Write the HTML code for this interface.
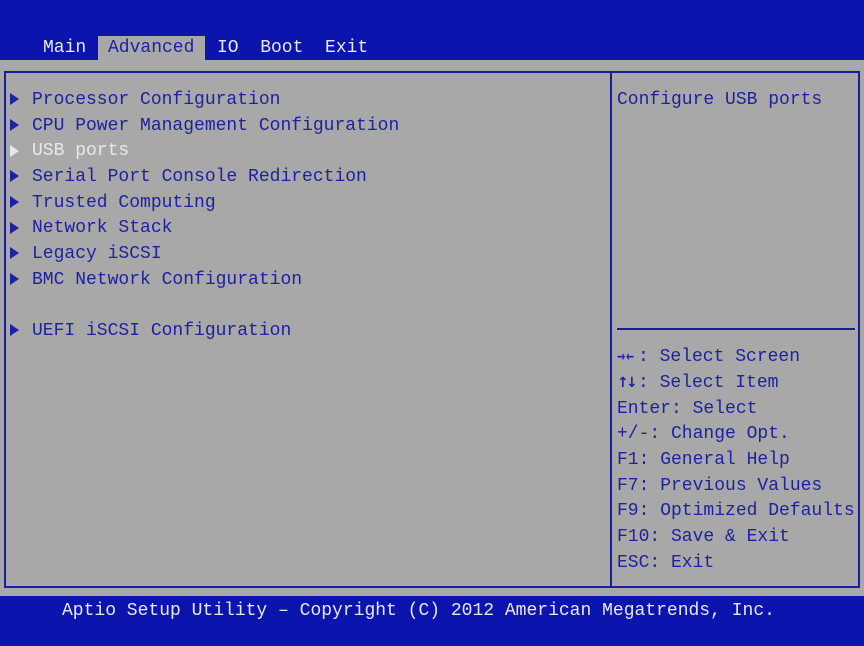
<!DOCTYPE html>
<html><head><meta charset="utf-8"><style>
html,body{margin:0;padding:0}
body{width:864px;height:646px;background:#a8a8a8;position:relative;overflow:hidden;font-family:"Liberation Mono","DejaVu Sans Mono",monospace;font-size:18px;color:#1e22a0}
.top{position:absolute;left:0;top:0;width:864px;height:60px;background:#0c14ae}
.bot{position:absolute;left:0;top:596px;width:864px;height:50px;background:#0c14ae}
.t{position:absolute;white-space:pre;line-height:20px}
.w{color:#e8e8f0}
.box{position:absolute;border:2px solid #1a1e9c}
.line{position:absolute;background:#1a1e9c}
.tri{position:absolute;width:0;height:0;border-top:6px solid transparent;border-bottom:6px solid transparent;border-left:9px solid #1e22a0}
.ar{position:absolute;top:0;font-family:"DejaVu Sans",sans-serif;font-weight:bold;font-size:14px}
</style></head><body>
<div class="top"></div>
<div style="position:absolute;left:98px;top:36px;width:107px;height:24px;background:#a8a8a8"></div>
<div class="t w" style="left:43px;top:38px">Main</div>
<div class="t" style="left:108px;top:38px">Advanced</div>
<div class="t w" style="left:217px;top:38px">IO  Boot  Exit</div>

<div class="box" style="left:4px;top:71px;width:852px;height:513px"></div>
<div class="line" style="left:610px;top:72px;width:2px;height:514px"></div>
<div class="line" style="left:617px;top:328px;width:238px;height:2px"></div>

<div class="tri" style="left:10px;top:93px"></div>
<div class="tri" style="left:10px;top:119px"></div>
<div class="tri" style="left:10px;top:145px;border-left-color:#e8e8f0"></div>
<div class="tri" style="left:10px;top:170px"></div>
<div class="tri" style="left:10px;top:196px"></div>
<div class="tri" style="left:10px;top:222px"></div>
<div class="tri" style="left:10px;top:247px"></div>
<div class="tri" style="left:10px;top:273px"></div>
<div class="tri" style="left:10px;top:324px"></div>

<div class="t" style="left:32px;top:90px">Processor Configuration</div>
<div class="t" style="left:32px;top:116px">CPU Power Management Configuration</div>
<div class="t w" style="left:32px;top:141px">USB ports</div>
<div class="t" style="left:32px;top:167px">Serial Port Console Redirection</div>
<div class="t" style="left:32px;top:193px">Trusted Computing</div>
<div class="t" style="left:32px;top:218px">Network Stack</div>
<div class="t" style="left:32px;top:244px">Legacy iSCSI</div>
<div class="t" style="left:32px;top:270px">BMC Network Configuration</div>
<div class="t" style="left:32px;top:321px">UEFI iSCSI Configuration</div>

<div class="t" style="left:617px;top:90px">Configure USB ports</div>
<div class="t" style="left:617px;top:347px;width:200px;height:20px"><span class="ar" style="left:0;transform:scaleX(0.7);transform-origin:left">→</span><span class="ar" style="left:9px;transform:scaleX(0.7);transform-origin:left">←</span><span style="position:absolute;left:21px">: Select Screen</span></div>
<div class="t" style="left:617px;top:373px;width:200px;height:20px"><span class="ar" style="left:0">↑</span><span class="ar" style="left:9px">↓</span><span style="position:absolute;left:21px">: Select Item</span></div>
<div class="t" style="left:617px;top:399px">Enter: Select</div>
<div class="t" style="left:617px;top:424px">+/-: Change Opt.</div>
<div class="t" style="left:617px;top:450px">F1: General Help</div>
<div class="t" style="left:617px;top:476px">F7: Previous Values</div>
<div class="t" style="left:617px;top:501px">F9: Optimized Defaults</div>
<div class="t" style="left:617px;top:527px">F10: Save &amp; Exit</div>
<div class="t" style="left:617px;top:553px">ESC: Exit</div>

<div class="bot"></div>
<div class="t w" style="left:62px;top:601px">Aptio Setup Utility – Copyright (C) 2012 American Megatrends, Inc.</div>
</body></html>
